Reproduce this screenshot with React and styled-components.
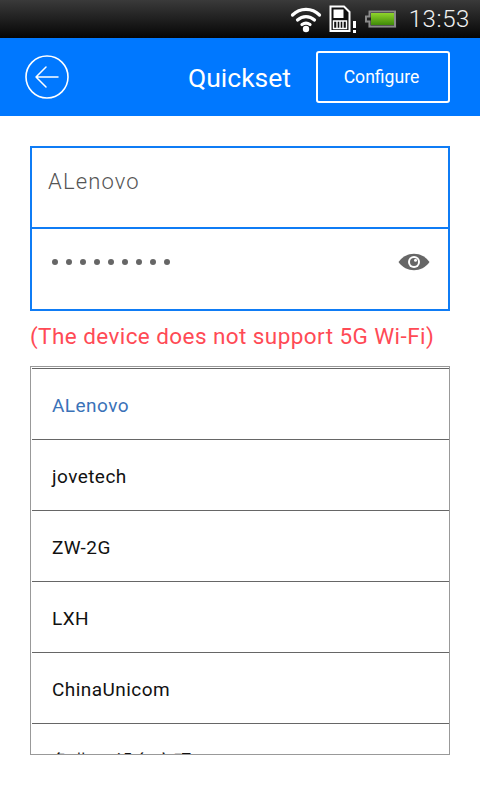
import styled, { createGlobalStyle } from "styled-components";

const wifiNames = ["ALenovo", "jovetech", "ZW-2G", "LXH", "ChinaUnicom", "免费5G设备实现"];

const GlobalStyle = createGlobalStyle`
  html, body {
    margin: 0;
    padding: 0;
    background: #fff;
    font-family: Roboto, "Noto Sans CJK SC", sans-serif;
  }
  * {
    box-sizing: border-box;
  }
`;

function WifiIcon() {
  return (
    <svg width="32" height="28" viewBox="0 0 32 28">
      <g fill="none" stroke="#fff" strokeWidth="3.2" strokeLinecap="round">
        <path d="M2.5 10 C10 2.5 22 2.5 29.5 10" />
        <path d="M7.5 15 C12.5 10.5 19.5 10.5 24.5 15" />
        <path d="M12 19.5 C14.5 17.7 17.5 17.7 20 19.5" />
      </g>
      <circle cx="16" cy="24" r="3.2" fill="#fff" />
    </svg>
  );
}

function SimIcon() {
  return (
    <svg width="28" height="28" viewBox="0 0 28 28">
      <path d="M1.5 1.5 H15 L20.5 7 V26 H1.5 Z" fill="#111" stroke="#fff" strokeWidth="2" />
      <path d="M4.5 4.5 H14.5 V13 H4.5 Z" fill="#fff" />
      <path d="M4.5 16 H17.5 V23.5 H4.5 Z M8 16 V23.5 M11 16 V23.5 M14 16 V23.5" fill="none" stroke="#fff" strokeWidth="1.4" />
      <rect x="24" y="16" width="3" height="7" fill="#fff" />
      <rect x="24" y="25" width="3" height="3" fill="#fff" />
    </svg>
  );
}

function BatteryIcon() {
  return (
    <svg width="33" height="20" viewBox="0 0 33 20">
      <defs>
        <linearGradient id="charge" x1="0" y1="0" x2="0" y2="1">
          <stop offset="0" stopColor="#8fd42c" />
          <stop offset="1" stopColor="#3f8a08" />
        </linearGradient>
      </defs>
      <path d="M0.5 6 H4 V1 H32.5 V19 H4 V14 H0.5 Z" fill="#222" />
      <path d="M2 7.5 H5.5 V2.5 H31 V17.5 H5.5 V12.5 H2 Z" fill="none" stroke="#8a8a8a" strokeWidth="2" />
      <rect x="7" y="4" width="23" height="12" fill="url(#charge)" />
    </svg>
  );
}

function BackIcon() {
  return (
    <svg width="44" height="44" viewBox="0 0 44 44">
      <g fill="none" stroke="#fff" strokeLinecap="round" strokeLinejoin="round">
        <circle cx="22" cy="22" r="21" strokeWidth="1.6" />
        <path d="M33 22 H11 M21 12 L11 22 L21 32" strokeWidth="1.5" />
      </g>
    </svg>
  );
}

function EyeIcon() {
  return (
    <svg width="32" height="18" viewBox="0 0 32 18">
      <path d="M0.5 9 C8 -2 24 -2 31.5 9 C24 20 8 20 0.5 9 Z" fill="#666" />
      <circle cx="16" cy="9" r="6" fill="#fff" />
      <circle cx="16" cy="9" r="4" fill="#666" />
      <circle cx="17.5" cy="7.2" r="1.5" fill="#fff" />
    </svg>
  );
}

export default function App() {
  return (
    <Page>
      <GlobalStyle />
      <StatusBar>
        <WifiIcon />
        <SimIcon />
        <BatteryIcon />
        <Clock>13:53</Clock>
      </StatusBar>
      <Header>
        <BackButton>
          <BackIcon />
        </BackButton>
        <Title>Quickset</Title>
        <ConfigureButton>Configure</ConfigureButton>
      </Header>
      <Content>
        <Form>
          <SsidField>ALenovo</SsidField>
          <PasswordField>
            <Dots>
              {Array.from({ length: 9 }).map((_, i) => (
                <Dot key={i} />
              ))}
            </Dots>
            <EyeIcon />
          </PasswordField>
        </Form>
        <Warning>(The device does not support 5G Wi-Fi)</Warning>
        <WifiList>
          {wifiNames.map((name, i) => (
            <WifiRow key={name} selected={i === 0}>
              {name}
            </WifiRow>
          ))}
        </WifiList>
      </Content>
    </Page>
  );
}

const Page = styled.div`
  width: 480px;
  height: 800px;
  overflow: hidden;
  background: #fff;
`;
const StatusBar = styled.div`
  height: 38px;
  display: flex;
  align-items: center;
  justify-content: flex-end;
  gap: 7px;
  padding-right: 10px;
  background: linear-gradient(#3a3a3a, #050505);
`;
const Clock = styled.span`
  margin-left: 5px;
  color: #f2f2f2;
  font-size: 24px;
  font-weight: 300;
  letter-spacing: 0.6px;
`;
const Header = styled.div`
  height: 78px;
  display: flex;
  align-items: center;
  padding: 0 30px 0 25px;
  background: #0078ff;
`;
const BackButton = styled.div`
  display: flex;
  width: 44px;
  height: 44px;
`;
const Title = styled.div`
  margin-left: 119px;
  color: #fff;
  font-size: 26.5px;
  flex: 1;
`;
const ConfigureButton = styled.div`
  width: 134px;
  height: 52px;
  display: flex;
  align-items: center;
  justify-content: center;
  padding-right: 3px;
  border: 2px solid #fff;
  border-radius: 3px;
  color: #fff;
  font-size: 17.6px;
`;
const Content = styled.div`
  padding: 30px 30px 0;
`;
const Form = styled.div`
  height: 165px;
  border: 2px solid #0f7cf5;
  display: flex;
  flex-direction: column;
`;
const SsidField = styled.div`
  height: 81px;
  padding: 4px 0 17px 16px;
  display: flex;
  align-items: center;
  border-bottom: 2px solid #0f7cf5;
  color: #555;
  font-size: 22px;
  font-weight: 300;
  letter-spacing: 1.15px;
`;
const PasswordField = styled.div`
  flex: 1;
  display: flex;
  align-items: center;
  justify-content: space-between;
  padding: 0 18px 15px 20px;
`;
const Dots = styled.div`
  display: flex;
  gap: 8px;
`;
const Dot = styled.span`
  width: 6px;
  height: 6px;
  border-radius: 50%;
  background: #666;
`;
const Warning = styled.div`
  margin-top: 10px;
  height: 30px;
  color: #ff4a55;
  font-size: 22.5px;
  letter-spacing: 0.42px;
  line-height: 30px;
  white-space: nowrap;
`;
const WifiList = styled.div`
  margin-top: 15px;
  height: 389px;
  overflow: hidden;
  border: 1px solid #999;
  padding: 1px 0 0 1px;
`;
const WifiRow = styled.div`
  height: 71px;
  display: flex;
  align-items: center;
  padding: 2px 0 0 20px;
  border-top: 1px solid #666;
  color: ${(props) => (props.selected ? "#3a72b8" : "#111")};
  font-size: 19px;
  letter-spacing: 0.45px;
`;
